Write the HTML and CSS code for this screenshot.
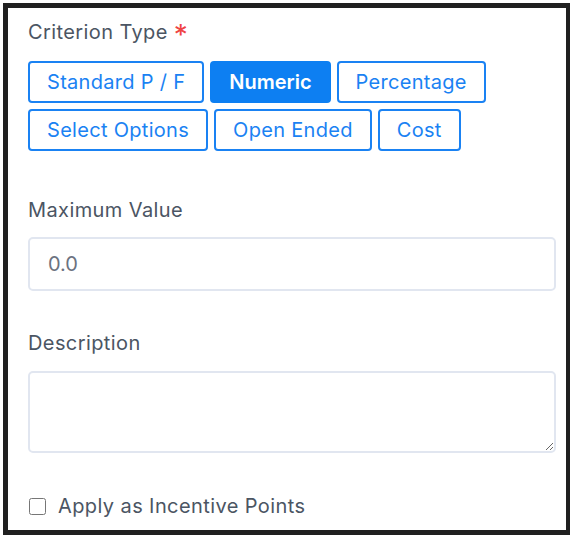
FILE: index.html
```html
<!DOCTYPE html>
<html lang="en">
<head>
  <meta charset="UTF-8">
  <meta name="viewport" content="width=device-width, initial-scale=1.0">
  <title>Criterion</title>
  <link rel="stylesheet" href="styles.css">
</head>
<body>
  <div class="panel">
    <!-- Criterion type -->
    <div class="field">
      <label class="field-label">Criterion Type <span class="required">*</span></label>
      <div class="type-group">
        <button class="type-btn">Standard P / F</button>
        <button class="type-btn active">Numeric</button>
        <button class="type-btn">Percentage</button>
        <button class="type-btn">Select Options</button>
        <button class="type-btn">Open Ended</button>
        <button class="type-btn">Cost</button>
      </div>
    </div>

    <!-- Maximum value -->
    <div class="field field-value">
      <label class="field-label" for="maxValue">Maximum Value</label>
      <input type="text" id="maxValue" class="text-input" placeholder="0.0">
    </div>

    <!-- Description -->
    <div class="field field-desc">
      <label class="field-label" for="description">Description</label>
      <textarea id="description" class="text-area"></textarea>
    </div>

    <label class="check-row">
      <input type="checkbox" class="check-box">
      <span>Apply as Incentive Points</span>
    </label>
  </div>
</body>
</html>
```

FILE: styles.css
```css
body {
  margin: 0;
  padding: 3px 0 0 3px;
  background-color: #fff;
  font-family: 'Inter', 'Noto Sans', sans-serif;
  color: #4b5563;
  overflow: hidden;
}
.panel {
  box-sizing: border-box;
  width: 567px;
  height: 532px;
  border: 5px solid #202020;
  border-right-width: 4px;
  background-color: #fff;
  padding: 12px 10px 0 20px;
}
.field-label {
  display: block;
  font-size: 20px;
  letter-spacing: 0.4px;
  line-height: 24px;
  color: #4b5563;
}
.required {
  color: #ef4444;
  font-size: 28px;
  line-height: 20px;
  vertical-align: -6px;
}
.type-group {
  display: flex;
  flex-wrap: wrap;
  gap: 6px 6px;
  margin-top: 16px;
  width: 470px;
}
.type-btn {
  box-sizing: border-box;
  height: 42px;
  padding: 0 17px;
  border: 2px solid #1a82f3;
  border-radius: 4px;
  background-color: #fff;
  color: #1a82f3;
  font-family: 'Inter', 'Noto Sans', sans-serif;
  font-size: 20px;
  letter-spacing: 0.3px;
  cursor: pointer;
}
.type-btn.active {
  background-color: #0d7ff2;
  border-color: #0d7ff2;
  color: #fff;
  font-weight: 600;
  letter-spacing: 0;
}
.field-value {
  margin-top: 47px;
}
.field-desc {
  margin-top: 40px;
}
.text-input,
.text-area {
  display: block;
  box-sizing: border-box;
  width: 528px;
  margin-top: 15px;
  border: 2px solid #e1e6f0;
  border-radius: 5px;
  font-family: 'Inter', 'Noto Sans', sans-serif;
  font-size: 20px;
  color: #333;
  outline: none;
}
.text-input {
  height: 54px;
  padding: 0 18px;
}
.text-input::placeholder {
  color: #6b7280;
}
.text-area {
  height: 82px;
  margin-top: 16px;
  padding: 10px 18px;
  resize: vertical;
}
.check-row {
  display: flex;
  align-items: center;
  gap: 12px;
  margin-top: 41px;
  font-size: 20px;
  letter-spacing: 0.4px;
  line-height: 24px;
  color: #4b5563;
}
.check-box {
  width: 17px;
  height: 17px;
  margin: 0 0 0 1px;
}
```
